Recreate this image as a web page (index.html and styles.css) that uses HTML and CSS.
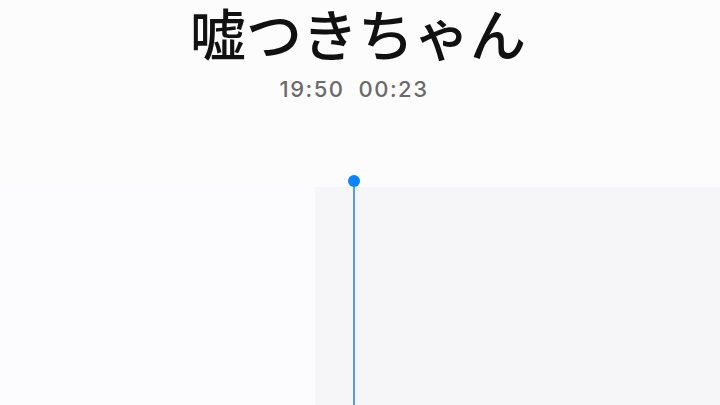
FILE: index.html
```html
<!DOCTYPE html>
<html lang="ja">
<head>
<meta charset="utf-8">
<link rel="stylesheet" href="styles.css">
</head>
<body>
<div class="page">
  <header class="header">
    <h1 class="title">嘘つきちゃん</h1>
    <div class="meta"><span>19:50</span><span>00:23</span></div>
  </header>
  <section class="track">
    <div class="left"></div>
    <div class="right">
      <div class="playhead"><span class="knob"></span></div>
    </div>
  </section>
</div>
</body>
</html>
```

FILE: styles.css
```css
html, body {
  margin: 0;
  padding: 0;
  width: 720px;
  height: 405px;
  overflow: hidden;
  background: #fdfcfd;
}
.page {
  display: flex;
  flex-direction: column;
  height: 405px;
}
.header {
  height: 187px;
  display: flex;
  flex-direction: column;
  align-items: center;
  box-sizing: border-box;
  padding-top: 0;
}
.title {
  margin: 0 4px 0 0;
  font-family: "Noto Sans CJK JP", "Noto Sans", sans-serif;
  font-weight: 500;
  font-size: 56px;
  line-height: 64px;
  color: #111;
}
.meta {
  margin: 12px 12px 0 0;
  display: flex;
  gap: 14px;
  font-family: Inter, "Liberation Sans", sans-serif;
  font-size: 22px;
  line-height: 26px;
  letter-spacing: 1.5px;
  color: #6a6a6c;
  font-weight: 500;
}
.track {
  flex: 1;
  display: flex;
}
.left {
  width: 315px;
  background: #fcfbfd;
}
.right {
  flex: 1;
  background: #f6f6f8;
  position: relative;
}
.playhead {
  position: absolute;
  left: 38px;
  top: -6px;
  bottom: 0;
  width: 2px;
  background: #5a9be8;
}
.knob {
  position: absolute;
  left: -5px;
  top: -6px;
  width: 12px;
  height: 12px;
  border-radius: 50%;
  background: #0a84ff;
}
```
